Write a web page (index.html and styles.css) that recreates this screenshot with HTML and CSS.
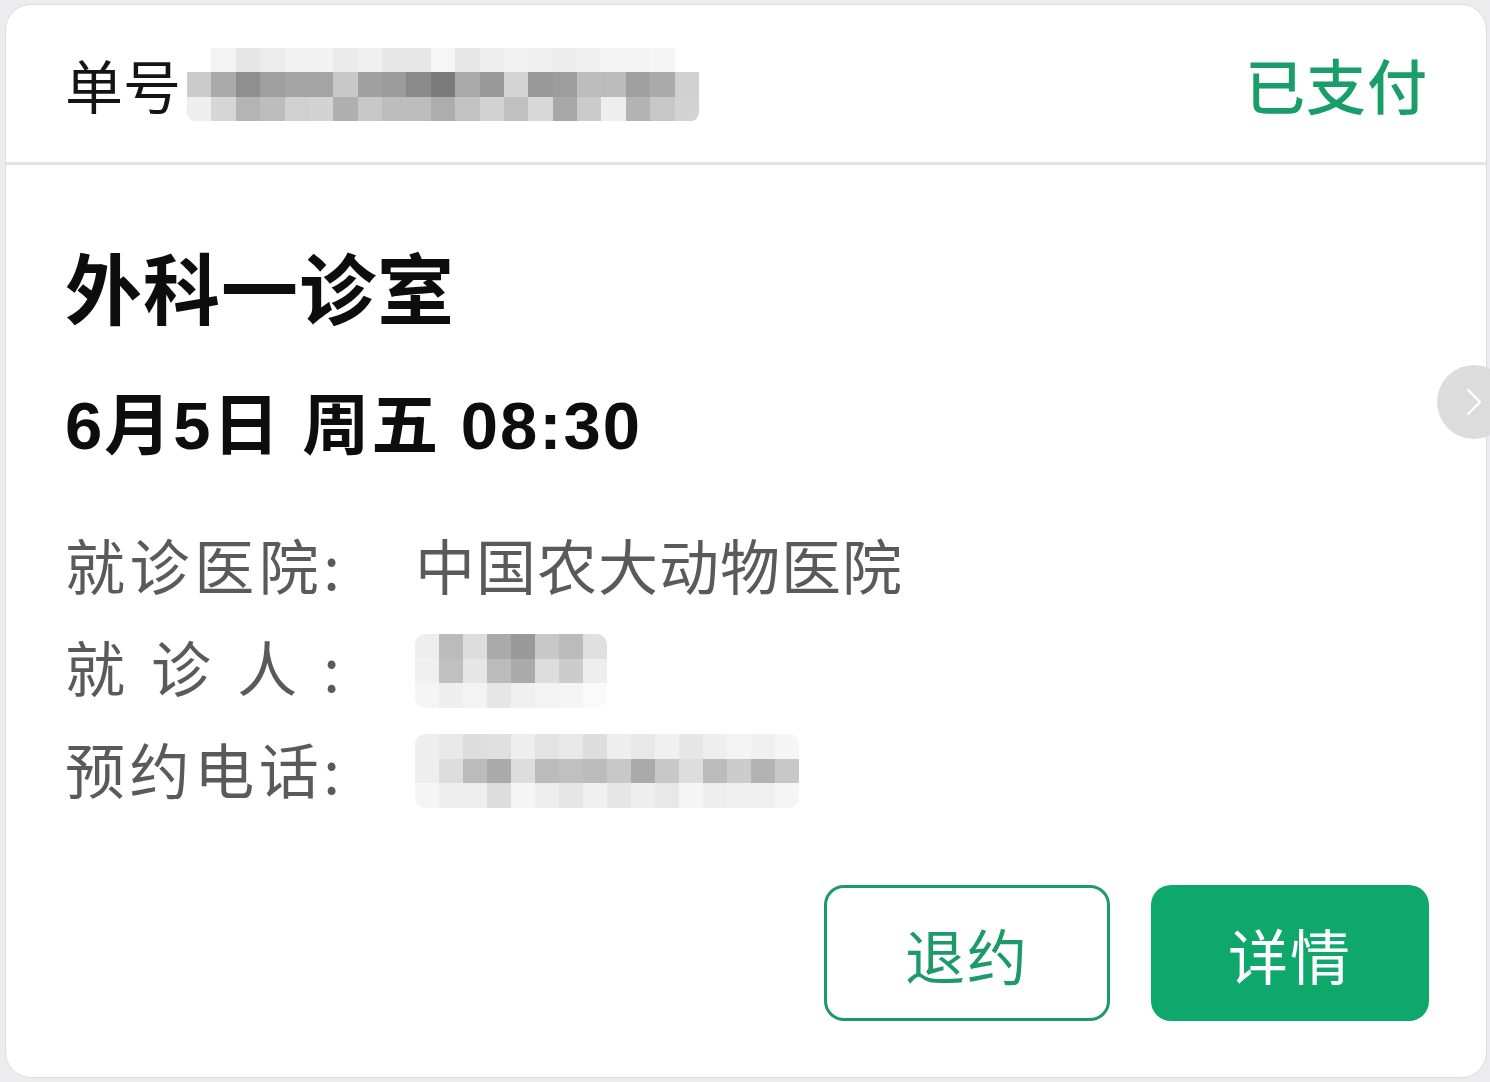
FILE: index.html
```html
<!DOCTYPE html>
<html lang="zh-CN">
<head>
	<meta charset="UTF-8">
	<title>预约订单</title>
	<link rel="stylesheet" href="styles.css">
</head>
<body>
	<div class="card">
		<div class="card-head">
			<div class="order-no">
				<span class="order-label">单号</span>
				<div class="mosaic mosaic-order" id="mosaicOrder"></div>
			</div>
			<span class="status">已支付</span>
		</div>

		<div class="card-body">
			<h2 class="room">外科一诊室</h2>
			<p class="time">6月5日 周五 08:30</p>

			<ul class="info">
				<li>
					<span class="info-label">就诊医院:</span>
					<span class="info-value">中国农大动物医院</span>
				</li>
				<li>
					<span class="info-label">就诊人:</span>
					<div class="mosaic mosaic-name" id="mosaicName"></div>
				</li>
				<li>
					<span class="info-label">预约电话:</span>
					<div class="mosaic mosaic-phone" id="mosaicPhone"></div>
				</li>
			</ul>

			<div class="actions">
				<a href="javascript:;" class="btn btn-line">退约</a>
				<a href="javascript:;" class="btn btn-fill">详情</a>
			</div>
		</div>

		<a href="javascript:;" class="side-next">
			<svg width="20" height="30" viewBox="0 0 20 30"><path d="M4 3 L16 15 L4 27" fill="none" stroke="#fff" stroke-width="2.4" stroke-linecap="round" stroke-linejoin="round"/></svg>
		</a>
	</div>

<script>
// 打码区域：每行一组灰度
var mosaics={
 mosaicOrder:[
  ["fff","f3f3f3","e6e6e6","ececec","f2f2f2","f2f2f2","ebebeb","f0f0f0","e7e7e7","e7e7e7","f6f6f6","e7e7e7","eee","f2f2f2","efefef","ececec","efefef","f3f3f3","f3f3f3","f5f5f5","fff"],
  ["ccc","aaa","8f8f8f","9f9f9f","a4a4a4","a4a4a4","c8c8c8","a0a0a0","9c9c9c","8a8a8a","7a7a7a","aaa","999","d4d4d4","999","9d9d9d","bdbdbd","bbb","a0a0a0","aaa","d0d0d0"],
  ["eee","d6d6d6","b4b4b4","bdbdbd","d0d0d0","d3d3d3","b0b0b0","c8c8c8","bdbdbd","bdbdbd","adadad","c3c3c3","d3d3d3","c0c0c0","d8d8d8","a8a8a8","cbcbcb","eee","b3b3b3","c7c7c7","d3d3d3"]
 ],
 mosaicName:[
  ["eee","bbb","ddd","aaa","999","c8c8c8","bbb","e0e0e0"],
  ["f0f0f0","c0c0c0","e6e6e6","bbb","aaa","ddd","ccc","eee"],
  ["f5f5f5","eee","f3f3f3","e6e6e6","f0f0f0","f3f3f3","f5f5f5","fafafa"]
 ],
 mosaicPhone:[
  ["eee","e8e8e8","ddd","e0e0e0","eee","e3e3e3","e8e8e8","ddd","eee","e8e8e8","f0f0f0","e6e6e6","eee","f3f3f3","f0f0f0","f5f5f5"],
  ["eee","ddd","bbb","aaa","ddd","bbb","c0c0c0","bbb","c8c8c8","aaa","c8c8c8","ddd","bbb","ccc","b3b3b3","c8c8c8"],
  ["f5f5f5","eee","eee","ddd","f5f5f5","eee","e6e6e6","f0f0f0","e6e6e6","eee","e8e8e8","f5f5f5","eee","f0f0f0","f0f0f0","f5f5f5"]
 ]
};

for(var id in mosaics){
	var box=document.getElementById(id);
	var rows=mosaics[id];
	box.style.gridTemplateColumns="repeat("+rows[0].length+",1fr)";
	for(var r=0;r<rows.length;r++){
		for(var c=0;c<rows[r].length;c++){
			var cell=document.createElement("i");
			cell.style.background="#"+rows[r][c];
			box.appendChild(cell);
		}
	}
}
</script>
</body>
</html>
```

FILE: styles.css
```css
html,body,h2,p,ul,li{margin:0;padding:0}
ul{list-style:none}
a{text-decoration:none}

html,body{
    height:100%;
    overflow:hidden;
}
body{
    box-sizing:border-box;
    padding:4px 3px 4px 5px;
    background:#ececee;
    font-family:"Noto Sans CJK SC", sans-serif;
    color:#111;
}

.card{
    position:relative;
    box-sizing:border-box;
    height:1074px;
    background:#fff;
    border:1px solid #dedee0;
    border-radius:26px;
}

/* 头部 */
.card-head{
    height:157px;
    display:flex;
    align-items:center;
    justify-content:space-between;
    padding:0 58px 0 59px;
    border-bottom:3px solid #e3e3e5;
}
.order-no{
    display:flex;
    align-items:center;
}
.order-label{
    font-size:58px;
    line-height:1;
    color:#141414;
}
.status{
    font-size:60px;
    line-height:1;
    font-weight:500;
    color:#1a9e69;
    letter-spacing:1px;
}

/* 打码 */
.mosaic{
    display:grid;
    grid-auto-rows:1fr;
    border-radius:10px;
    overflow:hidden;
}
.mosaic i{display:block}
.mosaic-order{
    width:512px;
    height:74px;
    margin:2px 0 0 6px;
}
.mosaic-name{
    width:192px;
    height:74px;
    margin-top:12px;
}
.mosaic-phone{
    width:384px;
    height:74px;
    margin-top:8px;
}

/* 内容 */
.card-body{
    padding:76px 57px 0 59px;
}
.room{
    font-size:77px;
    line-height:90px;
    font-weight:700;
    letter-spacing:1px;
    color:#0d0d0d;
}
.time{
    margin-top:55px;
    font-family:"Liberation Sans", "Noto Sans CJK SC", sans-serif;
    font-size:67px;
    line-height:80px;
    font-weight:700;
    letter-spacing:2px;
    color:#0d0d0d;
}

.info{
    margin-top:46px;
}
.info li{
    display:flex;
    align-items:center;
    height:102px;
    font-size:60px;
    color:#5a5a5a;
}
.info-label{
    width:275px;
    margin-right:75px;
    text-align:justify;
    text-align-last:justify;
    white-space:nowrap;
}
.info-value{
    letter-spacing:1px;
}

/* 按钮 */
.actions{
    display:flex;
    justify-content:flex-end;
    gap:41px;
    margin-top:67px;
}
.btn{
    box-sizing:border-box;
    display:flex;
    align-items:center;
    justify-content:center;
    height:136px;
    border-radius:20px;
    font-size:60px;
    letter-spacing:2px;
}
.btn-line{
    width:286px;
    border:3px solid #1e9a6a;
    color:#1e9a6a;
}
.btn-fill{
    width:278px;
    background:#0ea86d;
    color:#fff;
}

/* 右侧切换 */
.side-next{
    position:absolute;
    top:360px;
    right:-25px;
    width:74px;
    height:74px;
    border-radius:50%;
    background:#dcdcdc;
    display:flex;
    align-items:center;
    justify-content:flex-start;
    padding-left:27px;
    box-sizing:border-box;
}
```
